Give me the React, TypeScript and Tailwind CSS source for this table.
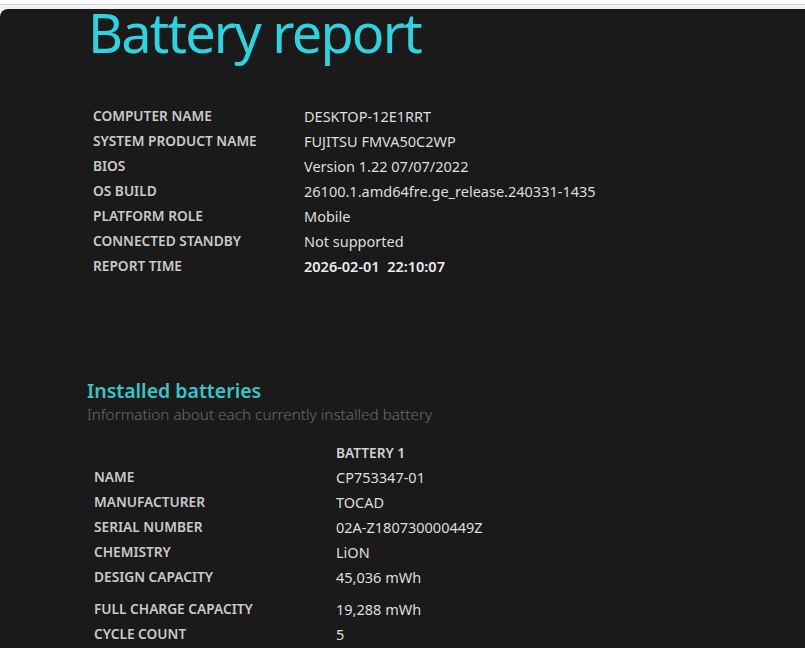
import React from 'react';

const systemInfo: [string, string, boolean?][] = [
  ['COMPUTER NAME', 'DESKTOP-12E1RRT'],
  ['SYSTEM PRODUCT NAME', 'FUJITSU FMVA50C2WP'],
  ['BIOS', 'Version 1.22 07/07/2022'],
  ['OS BUILD', '26100.1.amd64fre.ge_release.240331-1435'],
  ['PLATFORM ROLE', 'Mobile'],
  ['CONNECTED STANDBY', 'Not supported'],
  ['REPORT TIME', '2026-02-01\u00a0\u00a022:10:07', true],
];

const batteryInfo: [string, string][] = [
  ['NAME', 'CP753347-01'],
  ['MANUFACTURER', 'TOCAD'],
  ['SERIAL NUMBER', '02A-Z180730000449Z'],
  ['CHEMISTRY', 'LiON'],
  ['DESIGN CAPACITY', '45,036 mWh'],
];

const capacityInfo: [string, string][] = [
  ['FULL CHARGE CAPACITY', '19,288 mWh'],
  ['CYCLE COUNT', '5'],
];

const font = { fontFamily: '"Noto Sans", "Open Sans", sans-serif' };

const Row: React.FC<{ label: string; value: string; strong?: boolean; labelWidth: string }> = ({
  label,
  value,
  strong,
  labelWidth,
}) => (
  <div className="flex h-[25px] items-center">
    <div className={`${labelWidth} shrink-0 text-[13.7px] font-semibold text-[#cacaca]`}>{label}</div>
    <div className={`text-[14.5px] whitespace-nowrap ${strong ? 'font-semibold text-[#ececec]' : 'text-[#dedede]'}`}>
      {value}
    </div>
  </div>
);

export default function App() {
  return (
    <div className="w-[805px] h-[648px] overflow-hidden bg-[#f4f4f4]" style={font}>
      {/* browser chrome strip */}
      <div className="h-[4px] bg-white" />
      <div className="h-px bg-[#d6d6d6]" />
      <div className="h-[4px] bg-[#f2f2f2]" />

      <div className="h-[639px] rounded-tl-[8px] bg-[#1a1a1a] pl-[88px]">
        <h1 className="pt-px text-[54px] leading-[44px] font-normal tracking-[-1.8px] text-[#2fd2de]">
          Battery report
        </h1>

        <div className="mt-[50px] pl-[5px]">
          {systemInfo.map(([label, value, strong]) => (
            <Row key={label} label={label} value={value} strong={strong} labelWidth="w-[211px]" />
          ))}
        </div>

        <h2 className="mt-[99px] -ml-px text-[19.5px] leading-[26px] font-semibold text-[#3cc3ca]">
          Installed batteries
        </h2>
        <p className="-ml-px text-[15.3px] leading-[20px] font-light text-[#6a6a6a]">
          Information about each currently installed battery
        </p>

        <div className="mt-[18px] pl-[6px]">
          <div className="flex h-[23px] items-center">
            <div className="w-[242px] shrink-0" />
            <div className="text-[13.7px] font-semibold text-[#d2d2d2]">BATTERY 1</div>
          </div>
          {batteryInfo.map(([label, value]) => (
            <Row key={label} label={label} value={value} labelWidth="w-[242px]" />
          ))}
          <div className="h-[7px]" />
          {capacityInfo.map(([label, value]) => (
            <Row key={label} label={label} value={value} labelWidth="w-[242px]" />
          ))}
        </div>
      </div>
    </div>
  );
}
